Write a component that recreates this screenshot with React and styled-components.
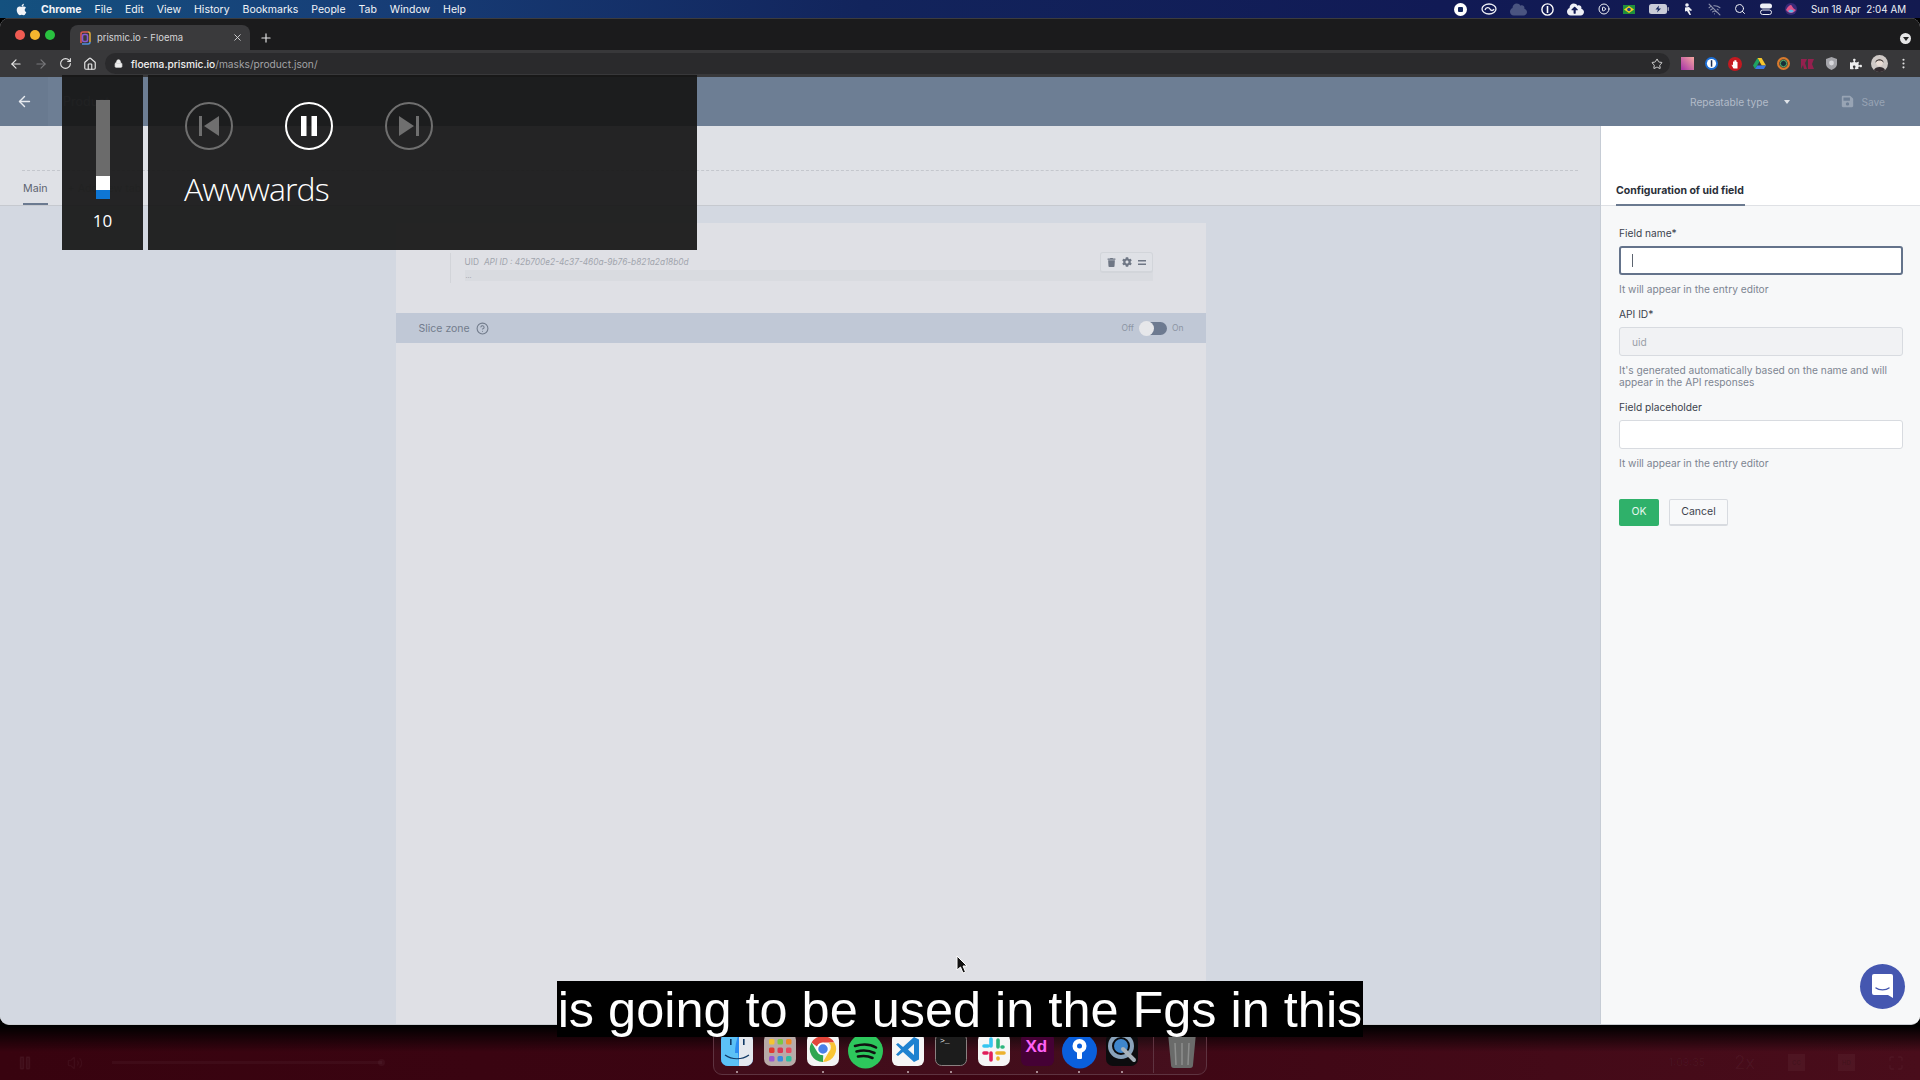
import React from 'react'
import styled, { createGlobalStyle } from 'styled-components'
import { FaApple, FaCloud, FaCloudUploadAlt, FaPuzzlePiece, FaTrash, FaCog, FaSave } from 'react-icons/fa'
import { ArrowLeft, ArrowRight, RotateCw, Home, Lock, Star, Search, X, Plus, CirclePlay, WifiOff, EllipsisVertical, CircleHelp, Volume2, Pause, Maximize } from 'lucide-react'

const Global = createGlobalStyle`
  html, body {
    margin: 0;
    padding: 0;
    background: #000;
    overflow: hidden;
  }
  * {
    box-sizing: border-box;
  }
`

const Page = styled.div`
  position: relative;
  width: 1920px;
  height: 1080px;
  display: flex;
  flex-direction: column;
  font-family: Inter, 'Liberation Sans', sans-serif;
  background:
    linear-gradient(180deg, #000 1026px, rgba(0, 0, 0, 0) 1052px),
    linear-gradient(90deg, #38030f 0%, #3c0513 50%, #490d1b 100%);
  overflow: hidden;
`

const MenuBar = styled.div`
  height: 18px;
  flex: none;
  display: flex;
  align-items: center;
  justify-content: space-between;
  padding: 0 14px 0 15px;
  background: linear-gradient(90deg, #14517f 0%, #173f78 18%, #12245c 45%, #111a55 75%, #131a50 100%);
  color: #f2f4f8;
  font-size: 10.5px;
`

const MenuLeft = styled.div`
  display: flex;
  align-items: center;
  gap: 13px;
`

const MenuItem = styled.span`
  font-weight: ${p => (p.$bold ? 700 : 400)};
`

const MenuRight = styled.div`
  display: flex;
  align-items: center;
  gap: 13.5px;
  color: #eef0f6;
`

const Clock = styled.span`
  font-size: 9.8px;
  white-space: pre;
`

const Browser = styled.div`
  height: 1007px;
  flex: none;
  display: flex;
  flex-direction: column;
  border-radius: 9px;
  overflow: hidden;
  background: #dfe1e6;
  border-bottom: 1px solid #c9ccd1;
`

const TabBar = styled.div`
  height: 32px;
  flex: none;
  display: flex;
  align-items: flex-end;
  padding-left: 15px;
  background: #1b1b1c;
  position: relative;
  border-top: 1px solid #3c3c3e;
`

const Lights = styled.div`
  display: flex;
  gap: 5px;
  align-self: center;
  margin-right: 15px;
`

const Light = styled.span`
  width: 10px;
  height: 10px;
  border-radius: 50%;
  background: ${p => p.$c};
`

const Tab = styled.div`
  width: 180px;
  height: 25px;
  display: flex;
  align-items: center;
  padding: 0 7px 0 9px;
  gap: 6px;
  background: #3a3a3c;
  border-radius: 8px 8px 0 0;
  color: #d6d6d8;
  font-size: 9.5px;
`

const TabTitle = styled.span`
  flex: 1;
`

const NewTab = styled.div`
  display: flex;
  align-items: center;
  height: 25px;
  margin-left: 9px;
  color: #e3e3e3;
`

const WindowMenu = styled.div`
  position: absolute;
  right: 9px;
  top: 14px;
  width: 11px;
  height: 11px;
  border-radius: 50%;
  background: #e6e6e6;
  display: flex;
  align-items: center;
  justify-content: center;

  &::after {
    content: '';
    border-left: 3px solid transparent;
    border-right: 3px solid transparent;
    border-top: 4px solid #222;
    margin-top: 1px;
  }
`

const Toolbar = styled.div`
  height: 27px;
  flex: none;
  display: flex;
  align-items: center;
  background: #38383a;
  padding: 0 4px;
  color: #dedede;
`

const NavButton = styled.span`
  width: 24.5px;
  display: flex;
  justify-content: center;
  color: ${p => (p.$dim ? '#77777a' : '#e4e4e4')};
`

const Address = styled.div`
  width: 1565px;
  height: 21px;
  margin-left: 3px;
  display: flex;
  align-items: center;
  border-radius: 11px;
  background: #2a2a2c;
  padding: 0 7px 0 9px;
  font-size: 10.2px;
  color: #a3a3a6;
`

const Host = styled.span`
  margin-left: 8px;
  color: #f0f0f0;
  font-weight: 500;
`

const AddressGap = styled.span`
  flex: 1;
`

const Extensions = styled.div`
  flex: 1;
  display: grid;
  grid-template-columns: repeat(10, 1fr);
  justify-items: center;
  align-items: center;
  padding-left: 5px;
`

const AppHeader = styled.div`
  height: 49px;
  flex: none;
  display: flex;
  align-items: center;
  background: #6d7e94;
  color: #b2bbc8;
  font-size: 10.2px;
`

const BackBox = styled.div`
  width: 48px;
  height: 100%;
  display: flex;
  align-items: center;
  justify-content: center;
  background: #697a90;
  color: #e7eaef;
`

const ProductName = styled.span`
  margin-left: 15px;
  flex: 1;
  font-size: 12.5px;
`

const TypeSelect = styled.div`
  display: flex;
  align-items: center;
  gap: 16px;
  margin-right: 51px;
`

const Caret = styled.span`
  border-left: 3.5px solid transparent;
  border-right: 3.5px solid transparent;
  border-top: 4px solid #e0e4ea;
`

const SaveButton = styled.div`
  display: flex;
  align-items: center;
  gap: 7px;
  margin-right: 35px;
  color: #98a4b4;
`

const Workspace = styled.div`
  flex: 1;
  display: grid;
  grid-template-columns: 1600px 320px;
  min-height: 0;
`

const Editor = styled.div`
  display: flex;
  flex-direction: column;
  background: #d3d8e1;
  min-height: 0;
`

const EditorHead = styled.div`
  height: 80px;
  flex: none;
  display: flex;
  flex-direction: column;
  background: #dfe1e6;
  border-bottom: 1px solid #c6c9cf;
`

const DashedRow = styled.div`
  height: 45px;
  flex: none;
  margin: 0 22px;
  border-bottom: 1px dashed #c4c7cd;
`

const TabRow = styled.div`
  flex: 1;
  display: flex;
  padding-left: 23px;
  gap: 20px;
`

const EditorTab = styled.div`
  display: flex;
  align-items: center;
  height: 100%;
  padding-top: ${p => (p.$active ? '2px' : '0')};
  font-size: 10.7px;
  color: ${p => (p.$active ? '#5d6470' : '#b9bdc5')};
  border-bottom: ${p => (p.$active ? '2px solid #6b7a90' : '0')};
`

const Canvas = styled.div`
  flex: 1;
  display: flex;
  justify-content: center;
  padding: 17px 0 0 1px;
  min-height: 0;
`

const Card = styled.div`
  width: 810px;
  display: flex;
  flex-direction: column;
  background: #dfe0e5;
`

const UidBlock = styled.div`
  height: 90px;
  flex: none;
  padding: 30px 53px 0 54px;
`

const UidInner = styled.div`
  position: relative;
  height: 30px;
  border-left: 1px solid #d2d4d9;
  padding-left: 14px;
  font-size: 8.3px;
  color: #a1a5ad;
`

const UidMeta = styled.div`
  height: 17px;
  display: flex;
  align-items: center;
  gap: 5px;
`

const UidId = styled.span`
  font-style: italic;
`

const UidField = styled.div`
  height: 11px;
  background: #d9dbe0;
  font-size: 7px;
  line-height: 12px;
  padding-left: 1px;
`

const ItemTools = styled.div`
  position: absolute;
  right: 0;
  top: -1px;
  width: 53px;
  height: 21px;
  display: flex;
  align-items: center;
  justify-content: space-around;
  padding: 0 3px 0 4px;
  background: #dfe1e6;
  border: 1px solid #d2d5da;
  border-bottom-width: 2px;
  border-radius: 3px;
  color: #6f7785;
`

const SliceBar = styled.div`
  height: 30px;
  flex: none;
  display: flex;
  align-items: center;
  padding: 0 22px 0 23px;
  background: #c0c8d6;
  font-size: 10.5px;
  color: #727c8c;
  gap: 6px;
`

const SliceSpacer = styled.span`
  flex: 1;
`

const ToggleLabel = styled.span`
  font-size: 8.5px;
  color: #8c95a3;
`

const Toggle = styled.span`
  position: relative;
  width: 27px;
  height: 13px;
  margin: 0 -1px 0 0;
  border-radius: 7px;
  background: #6d7a90;
`

const Knob = styled.span`
  position: absolute;
  left: -1px;
  top: -1px;
  width: 15px;
  height: 15px;
  border-radius: 50%;
  background: #e6e7ea;
`

const SidePanel = styled.div`
  display: flex;
  flex-direction: column;
  background: #f7f8f9;
  border-left: 1px solid #c6ccd5;
`

const SideHead = styled.div`
  height: 80px;
  flex: none;
  display: flex;
  align-items: flex-end;
  padding-left: 15px;
  background: #fff;
  border-bottom: 1px solid #dfe1e5;
`

const SideTitle = styled.div`
  width: 129px;
  height: 30px;
  padding-top: 8px;
  font-size: 10.5px;
  font-weight: 700;
  color: #2a2f38;
  border-bottom: 2px solid #6b7a90;
  margin-bottom: -1px;
  white-space: nowrap;
`

const SideBody = styled.div`
  padding: 20px 17px 0 18px;
  display: flex;
  flex-direction: column;
  gap: 12.5px;
`

const Field = styled.div`
  display: flex;
  flex-direction: column;
`

const FieldLabel = styled.label`
  height: 14px;
  margin-bottom: 6px;
  font-size: 10.2px;
  line-height: 15px;
  color: #3b424d;
`

const InputBox = styled.div`
  height: 29px;
  display: flex;
  align-items: center;
  padding: 1px 0 0 12px;
  font-size: 10.2px;
  border-radius: 3px;
  color: #9a9fa7;
  background: ${p => (p.$disabled ? '#f1f2f4' : '#fff')};
  border: ${p => (p.$focused ? '2px solid #64738b' : '1px solid #d8dbe0')};
  ${p => p.$focused && 'padding: 0 0 0 11px;'}
`

const TextCaret = styled.span`
  width: 1px;
  height: 13px;
  background: #5c6470;
`

const Helper = styled.div`
  margin-top: 7.5px;
  font-size: 10.2px;
  line-height: 12px;
  color: #7d8591;
`

const Actions = styled.div`
  display: flex;
  gap: 10px;
  margin-top: 17.5px;
`

const Button = styled.button`
  height: 27px;
  padding: 0;
  width: ${p => (p.$primary ? '40px' : '59px')};
  font-family: inherit;
  font-size: 10.5px;
  border-radius: 2px;
  color: ${p => (p.$primary ? '#e7f7ee' : '#3b424d')};
  background: ${p => (p.$primary ? '#2fb16a' : '#f8f9fa')};
  border: 1px solid ${p => (p.$primary ? '#2fb16a' : '#d8dbe0')};
  border-bottom-width: 2px;
`

const ChatBubble = styled.div`
  position: absolute;
  left: 1860px;
  top: 964px;
  width: 45px;
  height: 45px;
  border-radius: 50%;
  background: #4557b0;
  display: flex;
  align-items: center;
  justify-content: center;
`

const DeskStrip = styled.div`
  flex: 1;
  display: flex;
  align-items: center;
  padding: 20px 16px 0 17px;
  color: rgba(255, 255, 255, 0.04);
  font-size: 10.5px;
`

const DeskIcon = styled.span`
  display: flex;
  margin-right: ${p => p.$gap}px;
`

const DeskProgress = styled.div`
  position: relative;
  width: 270px;
  height: 3px;
  background: rgba(255, 255, 255, 0.035);

  &::after {
    content: '';
    position: absolute;
    right: -3px;
    top: -2px;
    width: 7px;
    height: 7px;
    border-radius: 50%;
    background: rgba(255, 255, 255, 0.04);
  }
`

const DeskSpacer = styled.span`
  flex: 1;
`

const DeskSpeed = styled.span`
  margin: 0 33px 0 29px;
  font-size: 18px;
`

const DeskBadge = styled.span`
  width: 17px;
  height: 17px;
  margin-right: 33px;
  display: flex;
  align-items: center;
  justify-content: center;
  background: rgba(255, 255, 255, 0.04);
  color: rgba(0, 0, 0, 0.15);
  font-size: 6px;
  font-weight: 700;
`

const VolumePanel = styled.div`
  position: absolute;
  left: 62px;
  top: 75px;
  width: 81px;
  height: 175px;
  display: flex;
  flex-direction: column;
  align-items: center;
  padding-top: 25px;
  background: rgba(22, 22, 22, 0.93);
  color: #fff;
`

const VolumeTrack = styled.div`
  width: 14px;
  height: 99px;
  display: flex;
  flex-direction: column;
  justify-content: flex-end;
  background: #6b6b6b;
`

const VolumeThumb = styled.div`
  height: 14px;
  background: #fff;
`

const VolumeLevel = styled.div`
  height: 9px;
  background: #0e76d4;
`

const VolumeValue = styled.div`
  margin-top: 12px;
  font-family: 'Open Sans', sans-serif;
  font-size: 17px;
  line-height: 20px;
`

const MediaPanel = styled.div`
  position: absolute;
  left: 148px;
  top: 75px;
  width: 549px;
  height: 175px;
  padding: 27px 0 0 37px;
  background: rgba(22, 22, 22, 0.93);
  color: #fff;
`

const MediaButtons = styled.div`
  display: flex;
  gap: 52px;
`

const MediaButton = styled.div`
  width: 48px;
  height: 48px;
  border-radius: 50%;
  display: flex;
  align-items: center;
  justify-content: center;
  border: 2px solid ${p => (p.$on ? '#fff' : '#6f6f6f')};
  color: ${p => (p.$on ? '#fff' : '#6f6f6f')};
`

const TrackName = styled.div`
  margin: 17px 0 0 -1px;
  font-family: 'Open Sans', sans-serif;
  font-weight: 300;
  font-size: 32px;
  letter-spacing: -0.9px;
  line-height: 44px;
`

const Caption = styled.div`
  position: absolute;
  left: 557px;
  top: 981px;
  width: 806px;
  height: 56px;
  display: flex;
  align-items: center;
  justify-content: center;
  padding-top: 1px;
  background: #000;
  color: #fff;
  font-family: 'Liberation Sans', sans-serif;
  font-size: 50.45px;
  white-space: nowrap;
  z-index: 3;
`

const Dock = styled.div`
  position: absolute;
  left: 713px;
  top: 1029px;
  width: 494px;
  height: 46px;
  display: flex;
  align-items: flex-start;
  padding: 3px 0 0 7px;
  gap: 10.8px;
  border: 1px solid #5e3340;
  border-radius: 9px;
  background: rgba(255, 255, 255, 0.035);
  z-index: 2;
`

const DockSlot = styled.div`
  position: relative;
  width: 32px;
  height: 33px;
  flex: none;

  &::after {
    content: '';
    display: ${p => (p.$running ? 'block' : 'none')};
    position: absolute;
    left: 15px;
    top: 38px;
    width: 2px;
    height: 2px;
    border-radius: 50%;
    background: #c8b4ba;
  }
`

const DockDivider = styled.div`
  width: 1px;
  height: 40px;
  margin: 0 3px 0 4px;
  background: #5e3340;
`

const XdText = styled.text`
  font-family: 'Liberation Sans', sans-serif;
  font-weight: 700;
  font-size: 17px;
  fill: #ff61f6;
`

const TermText = styled.text`
  font-family: 'Liberation Mono', monospace;
  font-size: 8px;
  fill: #eee;
`

const Cursor = styled.svg`
  position: absolute;
  left: 956px;
  top: 955px;
`

function AdobeCc() {
  return (
    <svg width="16" height="12" viewBox="0 0 16 12" fill="none" stroke="#eef0f6" strokeWidth="1.3">
      <ellipse cx="8" cy="6" rx="7" ry="5" />
      <path d="M4 7c1-3 4-3 5-1s3 2 4 0" />
    </svg>
  )
}

function RoundStop() {
  return (
    <svg width="13" height="13" viewBox="0 0 13 13">
      <circle cx="6.5" cy="6.5" r="6.5" fill="#fff" />
      <rect x="4" y="4" width="5" height="5" rx="1" fill="#12245c" />
    </svg>
  )
}

function OnePassMenu() {
  return (
    <svg width="13" height="13" viewBox="0 0 13 13" fill="none">
      <circle cx="6.5" cy="6.5" r="5.6" stroke="#fff" strokeWidth="1.4" />
      <rect x="5.7" y="3" width="1.6" height="7" fill="#fff" />
    </svg>
  )
}

function Battery() {
  return (
    <svg width="20" height="10" viewBox="0 0 20 10">
      <rect x="0" y="0" width="18" height="10" rx="2.5" fill="#c9ccd8" />
      <rect x="18.5" y="3" width="1.5" height="4" rx="0.7" fill="#9a9eb0" />
      <path d="M10 1.5 6.5 5.5H9L8 8.5 12 4.5H9.5z" fill="#12245c" />
    </svg>
  )
}

function Flag() {
  return (
    <svg width="12" height="9" viewBox="0 0 12 9">
      <rect width="12" height="9" fill="#1f8f3d" />
      <path d="M6 1 11 4.5 6 8 1 4.5z" fill="#f3d21f" />
      <circle cx="6" cy="4.5" r="1.8" fill="#1c3f94" />
    </svg>
  )
}

function Figure() {
  return (
    <svg width="12" height="13" viewBox="0 0 12 13" fill="#eef0f6">
      <circle cx="5" cy="2" r="1.8" />
      <path d="M3 4.5 7 4l3 3-1 1-2-1 2 5H7.5L5 8 3 8.5z" />
    </svg>
  )
}

function ControlCenter() {
  return (
    <svg width="12" height="12" viewBox="0 0 12 12" fill="#eef0f6">
      <rect x="0" y="0.5" width="12" height="5" rx="2.5" />
      <rect x="0.5" y="7" width="11" height="4.5" rx="2.2" fill="none" stroke="#eef0f6" />
    </svg>
  )
}

function Siri() {
  return (
    <svg width="12" height="12" viewBox="0 0 12 12">
      <circle cx="6" cy="6" r="6" fill="#3a2a78" />
      <path d="M1 7c2-4 4-5 5-5s1 3 5 5c-3 4-7 4-10 0z" fill="#e0548c" />
      <path d="M3 8c2-2 4-2 6 0-2 2-4 2-6 0z" fill="#58b8e8" />
    </svg>
  )
}

function PrismicFav() {
  return (
    <svg width="12" height="14" viewBox="0 0 12 14" fill="none" strokeWidth="1.6">
      <path d="M2 12V3a2 2 0 0 1 2-2h5" stroke="#d8574f" />
      <path d="M9 1a2 2 0 0 1 2 2v8" stroke="#d9a63a" />
      <path d="M11 11a2 2 0 0 1-2 2H3" stroke="#4f8fdc" />
      <rect x="3.5" y="3.5" width="5" height="7" rx="1.5" stroke="#8a5ad0" />
    </svg>
  )
}

function ExtSquare() {
  return (
    <svg width="13" height="13" viewBox="0 0 13 13">
      <defs>
        <linearGradient id="ext-a" x1="0" x2="1" y1="1" y2="0">
          <stop offset="0" stopColor="#a732a8" />
          <stop offset="1" stopColor="#f7a8a0" />
        </linearGradient>
      </defs>
      <rect width="13" height="13" fill="url(#ext-a)" />
    </svg>
  )
}

function ExtOnePass() {
  return (
    <svg width="13" height="13" viewBox="0 0 13 13" fill="none">
      <circle cx="6.5" cy="6.5" r="6.5" fill="#1d6fd6" />
      <circle cx="6.5" cy="6.5" r="4.6" fill="#fff" />
      <rect x="5.8" y="3.2" width="1.5" height="6.5" fill="#1b2c50" />
    </svg>
  )
}

function ExtHand() {
  return (
    <svg width="14" height="14" viewBox="0 0 14 14">
      <circle cx="7" cy="7" r="7" fill="#c41920" />
      <path d="M5 4.5v4L4 7.5 3.5 8l2 3.5h4V5h-1V3.5H7.5V3h-1v1.5z" fill="#fff" />
    </svg>
  )
}

function ExtDrive() {
  return (
    <svg width="13" height="12" viewBox="0 0 13 12">
      <path d="M4.4 0h4.2l4.4 7.5H8.8z" fill="#f7c52b" />
      <path d="M4.4 0 0 7.5 2.1 11 6.5 3.6z" fill="#1ea362" />
      <path d="M2.1 11h8.8L13 7.5H4.2z" fill="#3a78e7" />
    </svg>
  )
}

function ExtRing() {
  return (
    <svg width="13" height="13" viewBox="0 0 13 13" fill="none">
      <circle cx="6.5" cy="6.5" r="5.4" stroke="#d97a2c" strokeWidth="2.2" />
      <circle cx="6.5" cy="6.5" r="3.2" fill="#15303a" stroke="#59b56a" />
    </svg>
  )
}

function ExtMark() {
  return (
    <svg width="13" height="10" viewBox="0 0 13 10" fill="#94204e">
      <path d="M0 0h6L4 4l2 6H3L2 6 0 10zM7 0h6l-2 5 2 5H7z" />
    </svg>
  )
}

function ExtShield() {
  return (
    <svg width="11" height="13" viewBox="0 0 11 13">
      <path d="M5.5 0 11 2v5c0 3-3 5-5.5 6C3 12 0 10 0 7V2z" fill="#a5a5aa" />
      <circle cx="5.5" cy="6" r="2.4" fill="#d8d8dc" />
    </svg>
  )
}

function Avatar() {
  return (
    <svg width="17" height="17" viewBox="0 0 17 17">
      <circle cx="8.5" cy="8.5" r="8.5" fill="#cfc9c6" />
      <circle cx="8.5" cy="7.5" r="3.4" fill="#e9dcd4" />
      <path d="M4.5 8c-.5-5 8.500-5 8 0-1-2-2-2.500-4-2.500S5.500 6 4.500 8z" fill="#2a2322" />
      <path d="M3 15c1-4 10-4 11 0a8.500 8.500 0 0 1-11 0z" fill="#332c30" />
    </svg>
  )
}

function ChatIcon() {
  return (
    <svg width="23" height="27" viewBox="0 0 23 27">
      <path d="M3 1h17a2 2 0 0 1 2 2v22l-5-3H3a2 2 0 0 1-2-2V3a2 2 0 0 1 2-2z" fill="#fff" />
      <path d="M5 15c3 2.500 10 2.500 13 0" fill="none" stroke="#4557b0" strokeWidth="1.4" strokeLinecap="round" />
    </svg>
  )
}

function Finder() {
  return (
    <svg width="32" height="33" viewBox="0 0 32 33">
      <rect width="32" height="33" rx="7" fill="#2c8cf0" />
      <path d="M7 0h11c-3 8-4 14-4 20h3l1 13H7a7 7 0 0 1-7-7V7a7 7 0 0 1 7-7z" fill="#5cc1f6" />
      <path d="M18 0h7a7 7 0 0 1 7 7v19a7 7 0 0 1-7 7h-7z" fill="#e4e8ee" />
      <path d="M4 22c7 5 17 5 24 0" fill="none" stroke="#123a66" strokeWidth="1.2" />
      <rect x="9" y="6" width="1.6" height="6" fill="#123a66" />
      <rect x="22" y="6" width="1.6" height="6" fill="#123a66" />
    </svg>
  )
}

function Launchpad() {
  const dots = ['#f4c430', '#7ac943', '#f08a24', '#e03c31', '#d93a55', '#e84a5f', '#9b59d0', '#3a8ce0', '#2fc0a0']
  return (
    <svg width="32" height="33" viewBox="0 0 32 33">
      <rect width="32" height="33" rx="7" fill="#b8aaa8" />
      {dots.map((c, i) => (
        <rect key={i} x={5 + (i % 3) * 8.5} y={6 + Math.floor(i / 3) * 8.5} width="5.5" height="5.5" rx="1.5" fill={c} />
      ))}
    </svg>
  )
}

function Chrome() {
  return (
    <svg width="32" height="33" viewBox="0 0 32 33">
      <rect width="32" height="33" rx="7" fill="#f4f4f4" />
      <path d="M16 3a13 13 0 0 1 11.300 6.500H16a6.500 6.500 0 0 0-6 4L4.600 9.500A13 13 0 0 1 16 3z" fill="#e2453a" />
      <path d="M27.300 9.500A13 13 0 0 1 16 29l5.600-9.700a6.500 6.500 0 0 0 0-9.800z" fill="#f9c534" />
      <path d="M4.600 9.500 10.200 19a6.500 6.500 0 0 0 6 3L16 29A13 13 0 0 1 4.600 9.500z" fill="#2ea650" />
      <circle cx="16" cy="16" r="5.500" fill="#4a80e8" stroke="#fff" strokeWidth="1.5" />
    </svg>
  )
}

function Spotify() {
  return (
    <svg width="35" height="36" viewBox="0 0 35 36" style={{ marginLeft: -1 }}>
      <circle cx="17.5" cy="18" r="17.5" fill="#2dc75c" />
      <path d="M7 13c7-2 15-2 21 1.500M8.500 18.500c6-1.500 13-1 18 1.500M10 23.500c5-1 10-.8 14.500 1.500" fill="none" stroke="#111" strokeWidth="2.6" strokeLinecap="round" />
    </svg>
  )
}

function VsCode() {
  return (
    <svg width="32" height="33" viewBox="0 0 32 33">
      <rect width="32" height="33" rx="6" fill="#f6f6f6" />
      <path d="M22 4 27 6.500v20L22 29 11 19l-5 4-2-1.500 5-5-5-5L6 10l5 4z" fill="#1f82d0" />
      <path d="M22 11l-6 5.500 6 5.500z" fill="#f6f6f6" />
    </svg>
  )
}

function Terminal() {
  return (
    <svg width="32" height="33" viewBox="0 0 32 33">
      <rect x="0.5" y="0.5" width="31" height="32" rx="6" fill="#1c1c1c" stroke="#8a8080" />
      <TermText x="5" y="10">{'>_'}</TermText>
    </svg>
  )
}

function Slack() {
  return (
    <svg width="32" height="33" viewBox="0 0 32 33">
      <rect width="32" height="33" rx="7" fill="#f6f6f6" />
      <g fill="none" strokeWidth="3.6" strokeLinecap="round">
        <path d="M13 6v7M6 13h4" stroke="#36c5f0" />
        <path d="M20 7v7M24 14h1" stroke="#2eb67d" />
        <path d="M26 20h-7M20 25v1" stroke="#ecb22e" />
        <path d="M13 20v7M6 20h3" stroke="#e01e5a" />
      </g>
    </svg>
  )
}

function AdobeXd() {
  return (
    <svg width="33" height="33" viewBox="0 0 33 33">
      <rect width="33" height="33" rx="6" fill="#450135" />
      <XdText x="4.5" y="19">Xd</XdText>
    </svg>
  )
}

function OnePass() {
  return (
    <svg width="35" height="36" viewBox="0 0 35 36" style={{ marginLeft: -1 }}>
      <circle cx="17.5" cy="18" r="17.5" fill="#0a5fdc" />
      <circle cx="17.5" cy="13" r="7" fill="#fff" />
      <rect x="15" y="13" width="5" height="13" rx="1" fill="#fff" />
      <circle cx="17.5" cy="13" r="2.5" fill="#0a5fdc" />
    </svg>
  )
}

function QuickTime() {
  return (
    <svg width="32" height="33" viewBox="0 0 32 33">
      <rect width="32" height="33" rx="7" fill="#0c0c0e" />
      <circle cx="15" cy="13" r="11" fill="none" stroke="#8aa3ba" strokeWidth="4" />
      <circle cx="15" cy="13" r="7" fill="#3f86cc" />
      <path d="M17 16l11 11" stroke="#a8b2ba" strokeWidth="4" strokeLinecap="round" />
    </svg>
  )
}

function TrashCan() {
  return (
    <svg width="30" height="36" viewBox="0 0 30 36" style={{ marginLeft: -1 }}>
      <path d="M1 0h28l-3 32a3 3 0 0 1-3 3H7a3 3 0 0 1-3-3z" fill="#6a6b6a" />
      <path d="M8 10l1 22M15 10v22M22 10l-1 22" stroke="#8d8e8d" strokeWidth="1.5" />
    </svg>
  )
}

const menuItems = ['File', 'Edit', 'View', 'History', 'Bookmarks', 'People', 'Tab', 'Window', 'Help']

const dockApps = [
  { key: 'finder', Icon: Finder, running: true },
  { key: 'launchpad', Icon: Launchpad },
  { key: 'chrome', Icon: Chrome, running: true },
  { key: 'spotify', Icon: Spotify },
  { key: 'code', Icon: VsCode, running: true },
  { key: 'terminal', Icon: Terminal, running: true },
  { key: 'slack', Icon: Slack },
  { key: 'xd', Icon: AdobeXd, running: true },
  { key: 'onepass', Icon: OnePass, running: true },
  { key: 'quicktime', Icon: QuickTime, running: true },
]

export default function App() {
  return (
    <Page>
      <Global />
      <MenuBar>
        <MenuLeft>
          <FaApple size={13} />
          <MenuItem $bold>Chrome</MenuItem>
          {menuItems.map(m => (
            <MenuItem key={m}>{m}</MenuItem>
          ))}
        </MenuLeft>
        <MenuRight>
          <RoundStop />
          <AdobeCc />
          <FaCloud size={17} color="#4a5480" />
          <OnePassMenu />
          <FaCloudUploadAlt size={17} />
          <CirclePlay size={12} />
          <Flag />
          <Battery />
          <Figure />
          <WifiOff size={13} color="#8f94ae" />
          <Search size={12} />
          <ControlCenter />
          <Siri />
          <Clock>Sun 18 Apr  2:04 AM</Clock>
        </MenuRight>
      </MenuBar>

      <Browser>
        <TabBar>
          <Lights>
            <Light $c="#ef5b52" />
            <Light $c="#f5b62e" />
            <Light $c="#29c13f" />
          </Lights>
          <Tab>
            <PrismicFav />
            <TabTitle>prismic.io - Floema</TabTitle>
            <X size={11} />
          </Tab>
          <NewTab>
            <Plus size={14} />
          </NewTab>
          <WindowMenu />
        </TabBar>

        <Toolbar>
          <NavButton><ArrowLeft size={14} /></NavButton>
          <NavButton $dim><ArrowRight size={14} /></NavButton>
          <NavButton><RotateCw size={13} /></NavButton>
          <NavButton><Home size={14} /></NavButton>
          <Address>
            <Lock size={9} color="#eee" fill="#eee" />
            <Host>floema.prismic.io</Host>
            /masks/product.json/
            <AddressGap />
            <Star size={12} color="#d6d6d6" />
          </Address>
          <Extensions>
            <ExtSquare />
            <ExtOnePass />
            <ExtHand />
            <ExtDrive />
            <ExtRing />
            <ExtMark />
            <ExtShield />
            <FaPuzzlePiece size={12} color="#eee" />
            <Avatar />
            <EllipsisVertical size={13} />
          </Extensions>
        </Toolbar>

        <AppHeader>
          <BackBox><ArrowLeft size={17} /></BackBox>
          <ProductName>Product</ProductName>
          <TypeSelect>
            Repeatable type
            <Caret />
          </TypeSelect>
          <SaveButton>
            <FaSave size={13} />
            Save
          </SaveButton>
        </AppHeader>

        <Workspace>
          <Editor>
            <EditorHead>
              <DashedRow />
              <TabRow>
                <EditorTab $active>Main</EditorTab>
                <EditorTab>+ Add new tab</EditorTab>
              </TabRow>
            </EditorHead>
            <Canvas>
              <Card>
                <UidBlock>
                  <UidInner>
                    <UidMeta>
                      UID
                      <UidId>API ID : 42b700e2-4c37-460a-9b76-b821a2a18b0d</UidId>
                    </UidMeta>
                    <UidField>...</UidField>
                    <ItemTools>
                      <FaTrash size={9} />
                      <FaCog size={10} />
                      <svg width="8" height="5" viewBox="0 0 8 5" fill="#6f7785">
                        <rect width="8" height="1.5" />
                        <rect y="3.5" width="8" height="1.5" />
                      </svg>
                    </ItemTools>
                  </UidInner>
                </UidBlock>
                <SliceBar>
                  Slice zone
                  <CircleHelp size={13} />
                  <SliceSpacer />
                  <ToggleLabel>Off</ToggleLabel>
                  <Toggle><Knob /></Toggle>
                  <ToggleLabel>On</ToggleLabel>
                </SliceBar>
              </Card>
            </Canvas>
          </Editor>

          <SidePanel>
            <SideHead>
              <SideTitle>Configuration of uid field</SideTitle>
            </SideHead>
            <SideBody>
              <Field>
                <FieldLabel>Field name*</FieldLabel>
                <InputBox $focused><TextCaret /></InputBox>
                <Helper>It will appear in the entry editor</Helper>
              </Field>
              <Field>
                <FieldLabel>API ID*</FieldLabel>
                <InputBox $disabled>uid</InputBox>
                <Helper>It's generated automatically based on the name and will appear in the API responses</Helper>
              </Field>
              <Field>
                <FieldLabel>Field placeholder</FieldLabel>
                <InputBox />
                <Helper>It will appear in the entry editor</Helper>
              </Field>
              <Actions>
                <Button $primary>OK</Button>
                <Button>Cancel</Button>
              </Actions>
            </SideBody>
          </SidePanel>
        </Workspace>
      </Browser>

      <DeskStrip>
        <DeskIcon $gap={34}><Pause size={16} fill="currentColor" /></DeskIcon>
        <DeskIcon $gap={29}><Volume2 size={16} /></DeskIcon>
        <DeskProgress />
        <DeskSpacer />
        1:09:35
        <DeskSpeed>2x</DeskSpeed>
        <DeskBadge>CC</DeskBadge>
        <DeskBadge>HD</DeskBadge>
        <DeskIcon $gap={0}><Maximize size={16} /></DeskIcon>
      </DeskStrip>

      <ChatBubble><ChatIcon /></ChatBubble>

      <VolumePanel>
        <VolumeTrack>
          <VolumeThumb />
          <VolumeLevel />
        </VolumeTrack>
        <VolumeValue>10</VolumeValue>
      </VolumePanel>

      <MediaPanel>
        <MediaButtons>
          <MediaButton>
            <svg width="22" height="20" viewBox="0 0 22 20" fill="currentColor">
              <rect x="1" y="0" width="3" height="20" />
              <path d="M21 0v20L6 10z" />
            </svg>
          </MediaButton>
          <MediaButton $on>
            <svg width="16" height="20" viewBox="0 0 16 20" fill="currentColor">
              <rect x="0" y="0" width="5.5" height="20" />
              <rect x="10.5" y="0" width="5.5" height="20" />
            </svg>
          </MediaButton>
          <MediaButton>
            <svg width="22" height="20" viewBox="0 0 22 20" fill="currentColor">
              <path d="M1 0v20l15-10z" />
              <rect x="18" y="0" width="3" height="20" />
            </svg>
          </MediaButton>
        </MediaButtons>
        <TrackName>Awwwards</TrackName>
      </MediaPanel>

      <Dock>
        {dockApps.map(({ key, Icon, running }) => (
          <DockSlot key={key} $running={running}>
            <Icon />
          </DockSlot>
        ))}
        <DockDivider />
        <DockSlot><TrashCan /></DockSlot>
      </Dock>

      <Caption>is going to be used in the Fgs in this</Caption>

      <Cursor width="14" height="20" viewBox="0 0 14 20">
        <path d="M1 1v14l3.500-3 2.500 6 2.500-1-2.500-6H11z" fill="#111" stroke="#fff" strokeWidth="1" />
      </Cursor>
    </Page>
  )
}
